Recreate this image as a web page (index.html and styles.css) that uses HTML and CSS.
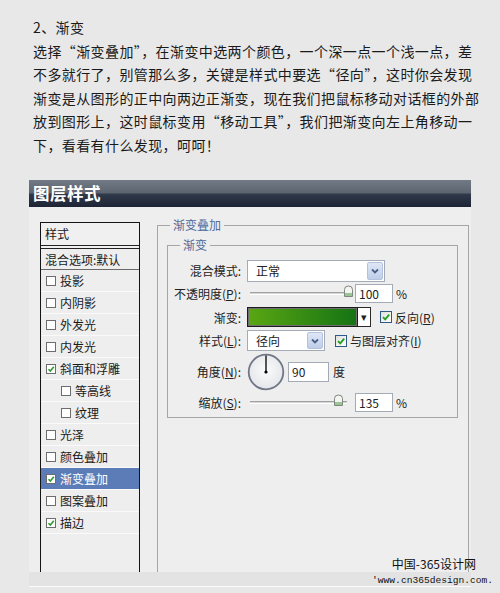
FILE: index.html
```html
<!doctype html>
<html lang="zh-CN">
<head>
    <meta charset="UTF-8">
    <meta name="viewport" content="width=device-width, initial-scale=1.0">
    <title>渐变叠加</title>
    <link rel="stylesheet" href="styles.css">
</head>
<body>
    <div class="article">
        <h2>2、渐变</h2>
        <p>选择“渐变叠加”，在渐变中选两个颜色，一个深一点一个浅一点，差<br>不多就行了，别管那么多，关键是样式中要选“径向”，这时你会发现<br>渐变是从图形的正中向两边正渐变，现在我们把鼠标移动对话框的外部<br>放到图形上，这时鼠标变用“移动工具”，我们把渐变向左上角移动一<br>下，看看有什么发现，呵呵！</p>
    </div>

    <!--图层样式对话框-->
    <div class="dialog">
        <div class="title">图层样式</div>
        <div class="body">
            <div class="styleList">
                <div class="head">样式</div>
                <div class="blend">混合选项:默认</div>
                <ul>
                    <li><span class="cb"></span>投影</li>
                    <li><span class="cb"></span>内阴影</li>
                    <li><span class="cb"></span>外发光</li>
                    <li><span class="cb"></span>内发光</li>
                    <li><span class="cb"><svg viewBox="0 0 8 8"><path d="M1.5 4.2 L3.3 6 L6.8 1.8" /></svg></span>斜面和浮雕</li>
                    <li class="sub"><span class="cb"></span>等高线</li>
                    <li class="sub"><span class="cb"></span>纹理</li>
                    <li><span class="cb"></span>光泽</li>
                    <li><span class="cb"></span>颜色叠加</li>
                    <li class="on"><span class="cb"><svg viewBox="0 0 8 8"><path d="M1.5 4.2 L3.3 6 L6.8 1.8" /></svg></span>渐变叠加</li>
                    <li><span class="cb"></span>图案叠加</li>
                    <li><span class="cb"><svg viewBox="0 0 8 8"><path d="M1.5 4.2 L3.3 6 L6.8 1.8" /></svg></span>描边</li>
                </ul>
            </div>

            <fieldset class="group">
                <legend>渐变叠加</legend>
                <fieldset class="inner">
                    <legend>渐变</legend>
                    <div class="row r1">
                        <label>混合模式:</label>
                        <div class="select wide"><span>正常</span><i class="drop"><svg viewBox="0 0 10 8"><path d="M2 2.5 L5 5.5 L8 2.5" /></svg></i></div>
                    </div>
                    <div class="row r2">
                        <label>不透明度(<u>P</u>):</label>
                        <div class="slider"><i class="thumb" style="left:93px"><svg viewBox="0 0 11 12"><path class="top" d="M1.5 11.5 V4.5 Q1.5 1 5.5 1 Q9.5 1 9.5 4.5 V11.5 Z" /><path class="base" d="M2 8 H9 V11 H2 Z" /></svg></i></div>
                        <div class="num">100</div><span class="unit">%</span>
                    </div>
                    <div class="row r3">
                        <label>渐变:</label>
                        <div class="grad"></div><i class="gradBtn">▾</i>
                        <span class="check"><svg viewBox="0 0 10 10"><path d="M2 5.2 L4.2 7.4 L8.2 2.6" /></svg></span><span>反向(<u>R</u>)</span>
                    </div>
                    <div class="row r4">
                        <label>样式(<u>L</u>):</label>
                        <div class="select narrow"><span>径向</span><i class="drop"><svg viewBox="0 0 10 8"><path d="M2 2.5 L5 5.5 L8 2.5" /></svg></i></div>
                        <span class="check"><svg viewBox="0 0 10 10"><path d="M2 5.2 L4.2 7.4 L8.2 2.6" /></svg></span><span>与图层对齐(<u>I</u>)</span>
                    </div>
                    <div class="row r5">
                        <label>角度(<u>N</u>):</label>
                        <svg class="dial" viewBox="0 0 38 38">
                            <defs>
                                <radialGradient id="dialFill" cx="50%" cy="45%" r="55%">
                                    <stop offset="0" stop-color="#fbfbfb"/>
                                    <stop offset="1" stop-color="#e4e6ea"/>
                                </radialGradient>
                            </defs>
                            <circle cx="19" cy="19" r="17.3" fill="url(#dialFill)" stroke="#6f7787" stroke-width="1.8"/>
                            <line x1="19" y1="19" x2="19" y2="2.5" stroke="#000" stroke-width="1.3"/>
                            <circle cx="19" cy="19" r="1.6" fill="#000"/>
                        </svg>
                        <div class="num angle">90</div><span class="unit">度</span>
                    </div>
                    <div class="row r6">
                        <label>缩放(<u>S</u>):</label>
                        <div class="slider"><i class="thumb" style="left:83px"><svg viewBox="0 0 11 12"><path class="top" d="M1.5 11.5 V4.5 Q1.5 1 5.5 1 Q9.5 1 9.5 4.5 V11.5 Z" /><path class="base" d="M2 8 H9 V11 H2 Z" /></svg></i></div>
                        <div class="num">135</div><span class="unit">%</span>
                    </div>
                </fieldset>
            </fieldset>
        </div>
        <div class="foot"></div>
    </div>

    <div class="mark">中国-365设计网<br><span>'www.cn365design.com.</span></div>
</body>
</html>
```

FILE: styles.css
```css
*{
    padding: 0;
    margin: 0;
    box-sizing: border-box;
}
ul{
    list-style: none;
}
body{
    background: #e8e8e8;
    color: #1a1a1a;
    font-family: "Noto Sans CJK SC", "Noto Sans", sans-serif;
    position: relative;
    height: 593px;
    overflow: hidden;
}

/* 文章 */
.article{
    padding: 16px 0 0 33px;
    font-size: 14px;
    line-height: 23.5px;
    letter-spacing: 0.4px;
}
.article h2{
    font-size: 14px;
    font-weight: normal;
}
.article p{
    font-feature-settings: "fwid" 1;
}

/* 对话框 */
.dialog{
    margin: 23px 0 0 29px;
    width: 442px;
}
.title{
    height: 27px;
    line-height: 27px;
    padding-left: 4px;
    color: #fff;
    font-size: 16.5px;
    font-weight: bold;
    letter-spacing: 0.5px;
    background: linear-gradient(#717a85, #5c6470 48%, #313a4a 52%, #1c2435);
}
.body{
    display: flex;
    align-items: flex-start;
    height: 365px;
    padding: 10px 0 0 11px;
    background: #eeeeee;
    overflow: hidden;
    font-size: 12px;
}
.foot{
    height: 15px;
    background: #e3e3e3;
    border-bottom: 1px solid #fbfbfb;
}

/* 左侧样式列表 */
.styleList{
    width: 100px;
    height: 360px;
    margin-top: 5px;
    border: 1px solid #141414;
    border-bottom: none;
    line-height: 21px;
}
.styleList .head{
    height: 26px;
    padding-left: 4px;
    border-bottom: 4px double #222;
    background: #f0f0f0;
}
.styleList .blend{
    height: 21px;
    padding-left: 4px;
    border-bottom: 1px solid #6a6a6a;
}
.styleList li{
    display: flex;
    align-items: center;
    height: 22px;
    border-bottom: 1px solid #fafafa;
}
.styleList li.sub .cb{
    margin-left: 20px;
}
.styleList li.on{
    background: #5b7cb6;
    color: #fff;
}
.cb{
    width: 10px;
    height: 10px;
    margin: 0 4px 0 5px;
    border: 1px solid #6d6d6d;
    background: #fff;
    display: flex;
}
.cb svg{
    width: 8px;
    height: 8px;
    fill: none;
    stroke: #2f9a2f;
    stroke-width: 1.6;
}

/* 右侧参数 */
.group{
    width: 312px;
    height: 400px;
    margin-left: 17px;
    padding: 4px 10px 0 9px;
    border: 1px solid #a5a5a5;
    border-bottom: none;
    min-width: 0;
}
.group legend,
.inner legend{
    font-size: 12px;
    line-height: 16px;
    padding: 0 3px;
    margin-left: 3px;
    color: #53699a;
}
.inner{
    width: 291px;
    padding: 6px 0 3px 0;
    border: 1px solid #a5a5a5;
    min-width: 0;
}
.inner legend{
    margin-left: 12px;
}
.row{
    display: flex;
    align-items: center;
    height: 23px;
    color: #222;
}
.row.r3{
    height: 24px;
}
.row.r5{
    height: 39px;
}
.row label{
    width: 73px;
    margin-right: 6px;
    text-align: right;
}
.select{
    display: flex;
    align-items: center;
    height: 22px;
    padding-left: 8px;
    border: 1px solid #a3abb6;
    background: #fff;
}
.select.wide{
    width: 138px;
}
.select.narrow{
    width: 78px;
    height: 21px;
}
.drop{
    margin-left: auto;
    width: 16px;
    height: 18px;
    margin-right: 1px;
    border: 1px solid #b4c2de;
    border-radius: 2px;
    background: linear-gradient(#dfe7f6, #bfcdea);
    display: flex;
    align-items: center;
    justify-content: center;
}
.select.narrow .drop{
    height: 17px;
}
.drop svg{
    width: 10px;
    height: 8px;
    fill: none;
    stroke: #4b5f86;
    stroke-width: 1.8;
}
.slider{
    position: relative;
    width: 97px;
    height: 3px;
    margin-left: 3px;
    border-top: 1px solid #a2a2a2;
    border-bottom: 1px solid #fff;
    background: #d6d6d6;
}
.thumb{
    position: absolute;
    top: -8px;
    width: 11px;
    height: 12px;
}
.thumb svg{
    display: block;
    width: 11px;
    height: 12px;
}
.thumb .top{
    fill: #f4f4f0;
    stroke: #7d877d;
}
.thumb .base{
    fill: #9cc596;
}
.num{
    width: 38px;
    height: 19px;
    line-height: 17px;
    margin-left: 8px;
    padding-left: 3px;
    border: 1px solid #a3abb6;
    background: #fff;
}
.num.angle{
    width: 41px;
    height: 20px;
    line-height: 18px;
    margin-left: 3px;
}
.unit{
    margin-left: 3px;
}
.r5 .unit{
    margin-left: 4px;
}
.grad{
    width: 111px;
    height: 20px;
    border: 1px solid #1b1b1b;
    box-shadow: inset 0 0 0 1px #6f6f6f;
    background: linear-gradient(90deg, #5aa613, #147314);
}
.gradBtn{
    width: 13px;
    height: 20px;
    line-height: 17px;
    text-align: center;
    font-style: normal;
    font-size: 11px;
    border: 1px solid #2a2a2a;
    border-left: none;
    background: #fff;
}
.check{
    width: 12px;
    height: 12px;
    margin: 0 3px 0 9px;
    border: 1px solid #2b5a86;
    background: linear-gradient(135deg, #e0e0da, #fff);
    display: flex;
}
.r4 .check{
    margin-left: 10px;
}
.check svg{
    width: 10px;
    height: 10px;
    fill: none;
    stroke: #22a022;
    stroke-width: 1.8;
}
.dial{
    width: 38px;
    height: 38px;
}

/* 水印 */
.mark{
    position: absolute;
    left: 372px;
    top: 557px;
    font-size: 12px;
    line-height: 14px;
    color: #111;
    text-align: right;
    width: 104px;
}
.mark span{
    display: inline-block;
    margin-right: -17px;
    font-family: "Liberation Mono", monospace;
    font-size: 9.6px;
    white-space: nowrap;
}
```
